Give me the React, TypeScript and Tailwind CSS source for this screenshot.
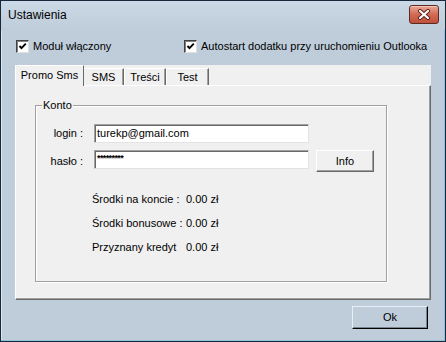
import React from 'react';

const font = "font-['Liberation_Sans',Arial,sans-serif]";

function CheckBox({ label }: { label: string }) {
  return (
    <div className="flex items-center gap-[4px]">
      <div className="w-[13px] h-[13px] bg-white border border-t-[#404040] border-l-[#404040] border-r-[#e0e0e0] border-b-[#e0e0e0] shadow-[inset_1px_1px_0_#808080] flex items-center justify-center">
        <svg width="9" height="9" viewBox="0 0 9 9">
          <path d="M1.5 4 L3.5 6.2 L7.8 1.6" fill="none" stroke="#000" strokeWidth="1.9" />
        </svg>
      </div>
      <span className="leading-[13px]">{label}</span>
    </div>
  );
}

function TextBox({ value, password }: { value: string; password?: boolean }) {
  return (
    <div className="w-[215px] h-[19px] bg-white border border-t-[#a0a0a0] border-l-[#a0a0a0] border-r-[#e3e3e3] border-b-[#e3e3e3] shadow-[inset_1px_1px_0_#696969] flex items-center pl-[2px]">
      {password ? (
        <span className="text-[9px] font-bold leading-[9px] tracking-[-0.6px] mt-[-2px]">{value}</span>
      ) : (
        <span className="leading-[13px]">{value}</span>
      )}
    </div>
  );
}

export default function App() {
  const tabs = ['SMS', 'Treści', 'Test'];
  const tabWidths = ['w-[40px]', 'w-[42px]', 'w-[43px]'];
  const stats = [
    { label: 'Środki na koncie :', value: '0.00 zł' },
    { label: 'Środki bonusowe :', value: '0.00 zł' },
    { label: 'Przyznany kredyt', value: '0.00 zł' },
  ];

  return (
    <div className={`${font} text-[11px] text-black w-[446px] h-[342px] border border-[#16283a] bg-[#bfcddb] shadow-[inset_-1px_-1px_0_#8fc3dd,inset_1px_1px_0_#dce6f0] flex flex-col`}>
      {/* Title bar */}
      <div className="h-[29px] flex items-start justify-between pl-[7px] pr-[6px] bg-gradient-to-b from-[#cbd8e6] to-[#bfcddb]">
        <span className="text-[12px] mt-[7px] leading-[15px]">Ustawienia</span>
        <div className="mt-[4px] w-[30px] h-[19px] rounded-[3px] border border-[#5c2a22] bg-gradient-to-b from-[#e9a896] via-[#d06a55] to-[#c0503a] shadow-[inset_0_1px_0_#f5c8ba] flex items-center justify-center">
          <svg width="14" height="11" viewBox="0 0 14 11">
            <path d="M3 2 L11 9 M11 2 L3 9" stroke="#5a2018" strokeWidth="4" strokeLinecap="round" />
            <path d="M3 2 L11 9 M11 2 L3 9" stroke="#ffffff" strokeWidth="2.2" strokeLinecap="round" />
          </svg>
        </div>
      </div>

      {/* Checkboxes */}
      <div className="flex mt-[10px] ml-[15px] h-[13px]">
        <div className="w-[168px]">
          <CheckBox label="Moduł włączony" />
        </div>
        <CheckBox label="Autostart dodatku przy uruchomieniu Outlooka" />
      </div>

      {/* Tab control */}
      <div className="mt-[12px] ml-[14px] w-[416px] h-[235px] bg-[#f0f0f0] flex flex-col">
        <div className="h-[20px] flex items-start">
          <div className="relative z-10 w-[69px] h-[21px] bg-[#f0f0f0] border-t border-l border-white border-r border-r-[#696969] flex items-center justify-center pb-[1px]">
            Promo Sms
          </div>
          {tabs.map((t, i) => (
            <div
              key={t}
              className={`${tabWidths[i]} h-[17px] mt-[3px] border-t border-white border-r border-r-[#696969] shadow-[inset_-1px_0_0_#a0a0a0] flex items-center justify-center ${i === 0 ? '' : 'border-l'}`}
            >
              {t}
            </div>
          ))}
        </div>
        <div className="h-[215px] border border-t-white border-l-white border-r-[#696969] border-b-[#696969] shadow-[inset_-1px_-1px_0_#a0a0a0]">
          {/* Group box */}
          <div className="relative ml-[19px] mt-[19px] w-[352px] h-[177px] border border-[#a0a0a0] shadow-[inset_1px_1px_0_#ffffff,1px_1px_0_#ffffff]">
            <span className="absolute -top-[7px] left-[6px] px-[1px] bg-[#f0f0f0] leading-[13px]">Konto</span>

            <div className="flex items-center mt-[18px]">
              <span className="w-[47px] text-right">login :</span>
              <div className="ml-[11px]">
                <TextBox value="turekp@gmail.com" />
              </div>
            </div>

            <div className="flex items-start mt-[7px]">
              <span className="w-[47px] text-right mt-[3px]">hasło :</span>
              <div className="ml-[11px]">
                <TextBox value="*********" password />
              </div>
              <button className="ml-[7px] w-[58px] h-[22px] bg-[#f0f0f0] border border-t-white border-l-white border-r-[#696969] border-b-[#696969] shadow-[inset_-1px_-1px_0_#a0a0a0] flex items-center justify-center">
                Info
              </button>
            </div>

            <div className="mt-[15px] pl-[56px] flex flex-col">
              {stats.map((s) => (
                <div key={s.label} className="h-[24px] flex items-center">
                  <span className="w-[94px]">{s.label}</span>
                  <span>{s.value}</span>
                </div>
              ))}
            </div>
          </div>
        </div>
      </div>

      {/* Bottom */}
      <div className="flex justify-end mt-[6px] mr-[17px]">
        <button className="w-[76px] h-[23px] bg-[#bfcddb] border border-t-[#e8eef4] border-l-[#e8eef4] border-r-black border-b-black shadow-[inset_-1px_-1px_0_#7a8590] flex items-center justify-center">
          Ok
        </button>
      </div>
    </div>
  );
}
